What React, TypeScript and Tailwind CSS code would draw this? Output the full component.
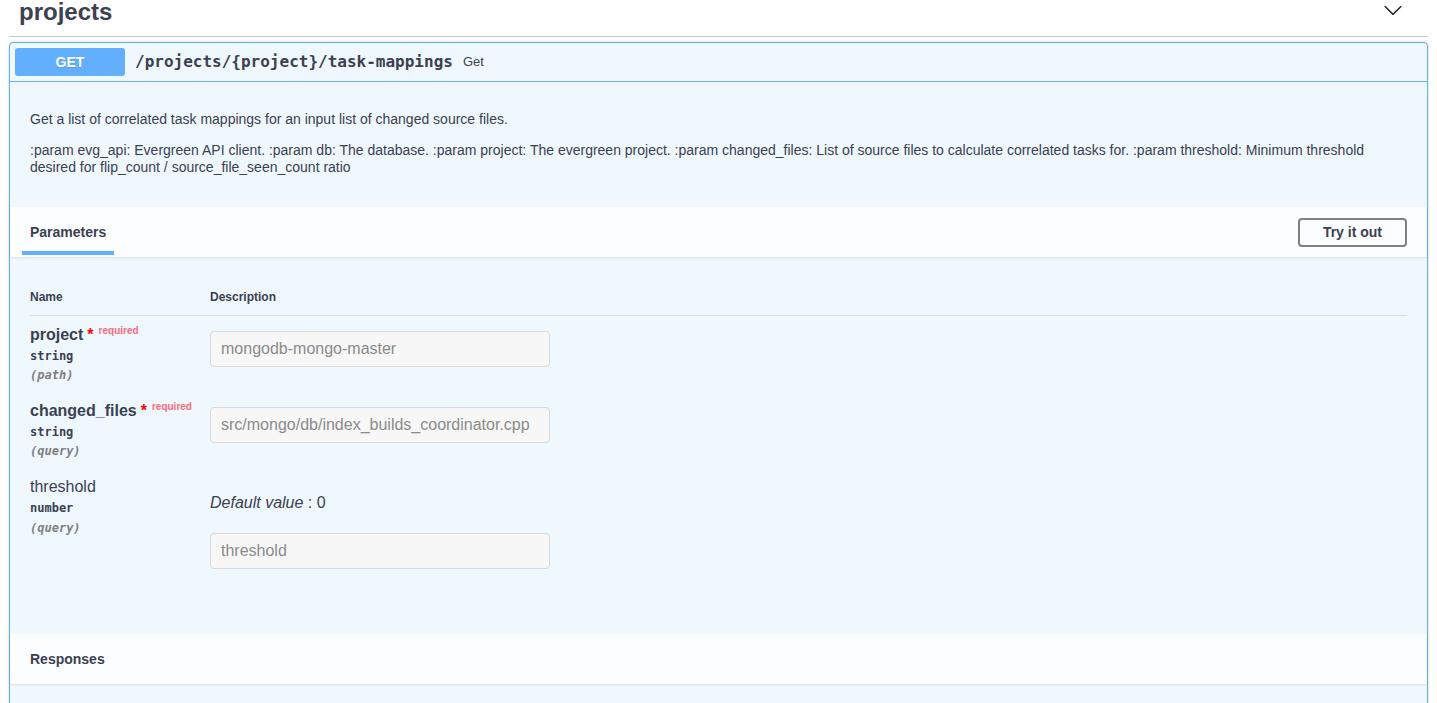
import React from "react";

const SANS = "font-['Liberation_Sans',Arial,sans-serif]";
const MONO = "font-['DejaVu_Sans_Mono',monospace]";

function Param({
  name,
  type,
  loc,
  required,
  placeholder,
  defaultValue,
}: {
  name: string;
  type: string;
  loc: string;
  required?: boolean;
  placeholder: string;
  defaultValue?: string;
}) {
  return (
    <div className="flex py-[10px]">
      <div className="w-[180px] shrink-0">
        <div className={`text-[16px] leading-[18px] text-[#3b4151] ${required ? "font-bold" : "font-normal"}`}>
          {name}
          {required && (
            <>
              <span className="text-[red] ml-[4px]">*</span>
              <span className="relative -top-[6px] text-[10px] font-bold text-[#ff6b7b] ml-[5px]">required</span>
            </>
          )}
        </div>
        <div className={`${MONO} ${required ? "mt-[2px]" : "mt-[4px]"} text-[12px] leading-[16px] font-bold text-[#3b4151]`}>{type}</div>
        <div className={`${MONO} ${required ? "mt-[3px] -mb-[1px]" : "mt-[4px]"} text-[12px] leading-[16px] font-bold italic text-[#808080]`}>({loc})</div>
      </div>
      <div className="flex-1">
        {defaultValue !== undefined && (
          <p className="mt-[16px] mb-[21px] text-[16px] leading-[18px] text-[#3b4151]">
            <i>Default value</i> : {defaultValue}
          </p>
        )}
        <input
          disabled
          placeholder={placeholder}
          className={`${SANS} my-[5px] block w-[340px] h-[36px] px-[10px] rounded-[4px] border border-[#d9d9d9] bg-[#f7f7f7] text-[16px] placeholder:text-[#8b8b8b]`}
        />
      </div>
    </div>
  );
}

export default function App() {
  return (
    <div className={`${SANS} bg-white min-h-[703px] overflow-hidden text-[#3b4151]`}>
      <div className="px-[9px]">
        {/* tag heading */}
        <div className="-mt-[12px] flex items-center pt-[10px] pb-[10px] pl-[10px] pr-[25px] border-b border-[#c4c6cb]">
          <h3 className="flex-1 text-[24px] leading-[28px] font-bold text-[#3b4151]">projects</h3>
          <svg width="20" height="20" viewBox="0 0 20 20" className="-mt-[4px]">
            <path
              fill="#222"
              d="M17.418 6.109c.272-.268.709-.268.979 0s.271.701 0 .969l-7.908 7.83c-.27.268-.707.268-.979 0l-7.908-7.83c-.27-.268-.27-.701 0-.969.271-.268.709-.268.979 0L10 13.25l7.418-7.141z"
            />
          </svg>
        </div>

        {/* opblock */}
        <div className="mt-[5px] border border-[#61affe] rounded-[4px] bg-[#eff7ff] shadow-[0_0_3px_rgba(0,0,0,0.19)]">
          <div className="flex items-center p-[5px] border-b border-[#61affe]">
            <div className="w-[110px] h-[28px] flex items-center justify-center rounded-[3px] bg-[#61affe] text-white text-[14px] font-bold [text-shadow:0_1px_0_rgba(0,0,0,0.1)]">
              GET
            </div>
            <span className={`${MONO} ml-[10px] text-[16px] font-bold text-[#3b4151]`}>
              /projects/{"{project}"}/task-mappings
            </span>
            <span className="ml-[10px] text-[13px] text-[#3b4151]">Get</span>
          </div>

          <div className="px-[20px] pt-[15px] pb-[16px] text-[14px] leading-[17px] text-[#3b4151]">
            <p className="my-[14px]">Get a list of correlated task mappings for an input list of changed source files.</p>
            <p className="my-[14px]">
              :param evg_api: Evergreen API client. :param db: The database. :param project: The evergreen project.
              :param changed_files: List of source files to calculate correlated tasks for. :param threshold: Minimum
              threshold desired for flip_count / source_file_seen_count ratio
            </p>
          </div>

          {/* Parameters header */}
          <div className="mt-[1px] h-[50px] flex items-center px-[20px] bg-[#fcfdff] shadow-[0_1px_2px_rgba(0,0,0,0.1)]">
            <div className="flex-1 h-full flex items-end">
              <div className="relative h-full flex items-center px-[8px] -ml-[8px]">
                <h4 className="text-[14px] font-bold text-[#3b4151]">Parameters</h4>
                <div className="absolute left-0 right-0 bottom-[2px] h-[4px] bg-[#61affe]" />
              </div>
            </div>
            <button className="h-[29px] px-[23px] border-2 border-[#808080] rounded-[4px] text-[14px] font-bold text-[#3b4151] bg-transparent">
              Try it out
            </button>
          </div>

          {/* Table */}
          <div className="px-[20px] pt-[20px] pb-[50px]">
            <div className="flex pt-[13px] pb-[11px] border-b border-[#d8dde4] text-[12px] leading-[14px] font-bold text-[#3b4151]">
              <div className="w-[180px]">Name</div>
              <div>Description</div>
            </div>
            <Param name="project" type="string" loc="path" required placeholder="mongodb-mongo-master" />
            <Param name="changed_files" type="string" loc="query" required placeholder="src/mongo/db/index_builds_coordinator.cpp" />
            <Param name="threshold" type="number" loc="query" placeholder="threshold" defaultValue="0" />
          </div>

          {/* Responses header */}
          <div className="h-[50px] flex items-center px-[20px] bg-[#fcfdff] shadow-[0_1px_2px_rgba(0,0,0,0.1)]">
            <h4 className="text-[14px] font-bold text-[#3b4151]">Responses</h4>
          </div>
          <div className="h-[120px]" />
        </div>
      </div>
    </div>
  );
}
